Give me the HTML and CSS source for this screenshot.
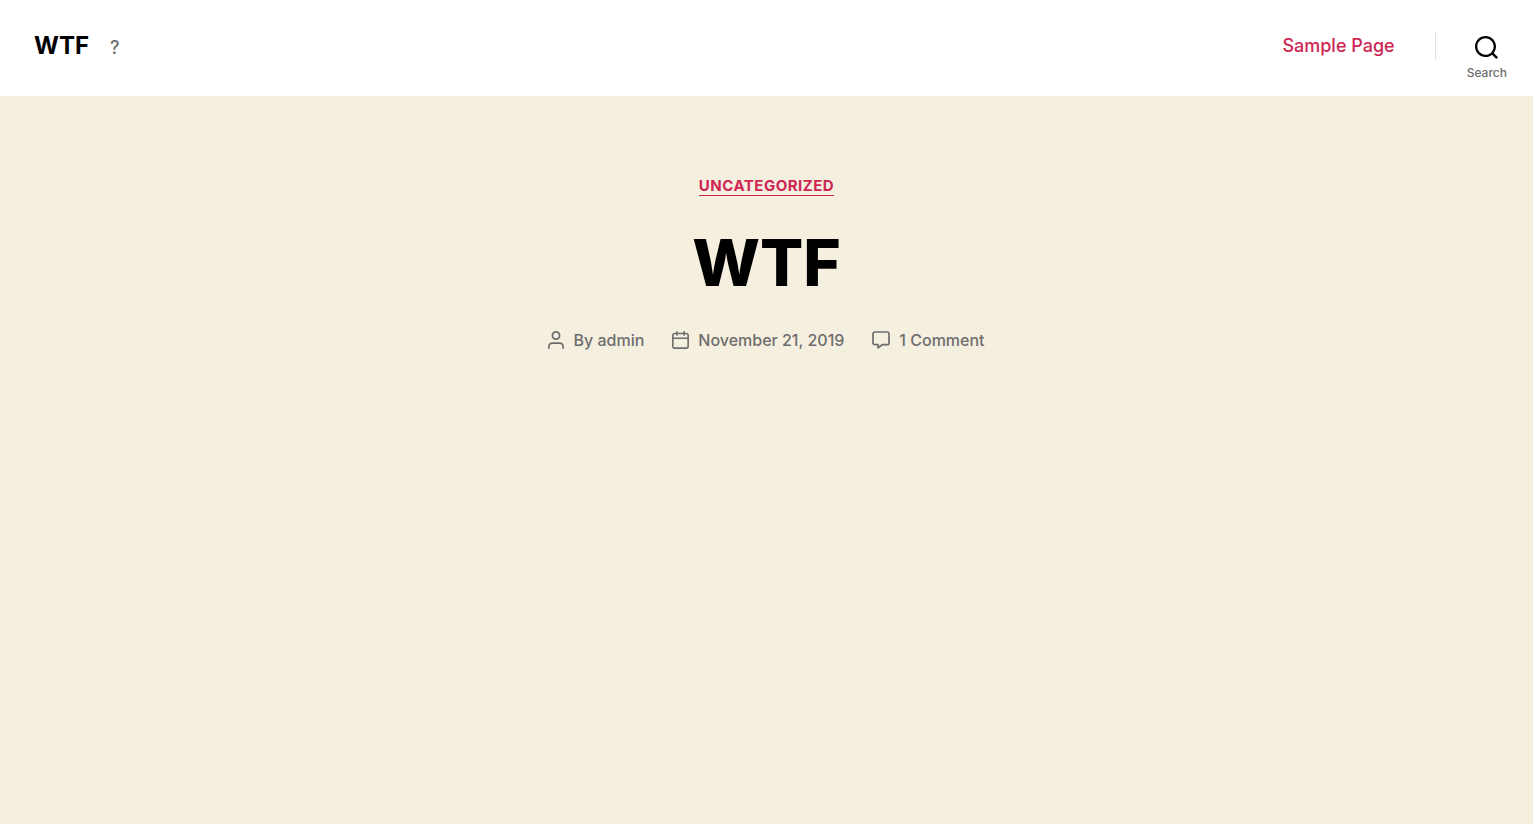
FILE: index.html
```html
<!DOCTYPE html>
<html lang="en-US">
<head>
<meta charset="utf-8">
<meta name="viewport" content="width=device-width, initial-scale=1">
<title>WTF</title>
<link rel="stylesheet" href="styles.css">
</head>
<body>
<header class="site-header">
  <div class="header-titles">
    <a class="site-title" href="#">WTF</a>
    <span class="site-description">?</span>
  </div>
  <div class="header-navigation">
    <nav aria-label="Primary"><a class="nav-link" href="#">Sample Page</a></nav>
    <div class="search-wrapper">
      <button class="search-toggle" type="button">
        <svg class="search-icon" viewBox="0 0 23 23" aria-hidden="true"><path d="M38.710696,48.0601792 L43,52.3494831 L41.3494831,54 L37.0601792,49.710696 C35.2632422,51.1481185 32.9839107,52.0076499 30.5038249,52.0076499 C24.7027226,52.0076499 20,47.3049272 20,41.5038249 C20,35.7027226 24.7027226,31 30.5038249,31 C36.3049272,31 41.0076499,35.7027226 41.0076499,41.5038249 C41.0076499,43.9839107 40.1481185,46.2632422 38.710696,48.0601792 Z M36.3875844,47.1716785 C37.8030221,45.7026647 38.6734666,43.7048964 38.6734666,41.5038249 C38.6734666,36.9918565 35.0157934,33.3341833 30.5038249,33.3341833 C25.9918565,33.3341833 22.3341833,36.9918565 22.3341833,41.5038249 C22.3341833,46.0157934 25.9918565,49.6734666 30.5038249,49.6734666 C32.7048964,49.6734666 34.7026647,48.8030221 36.1716785,47.3875844 C36.2023931,47.347638 36.2360451,47.3092237 36.2726343,47.2726343 C36.3092237,47.2360451 36.347638,47.2023931 36.3875844,47.1716785 Z" transform="translate(-20 -31)"/></svg>
        <span class="search-text">Search</span>
      </button>
    </div>
  </div>
</header>
<main>
  <article class="entry-header">
    <a class="entry-category" href="#">Uncategorized</a>
    <h1 class="entry-title">WTF</h1>
    <ul class="post-meta">
      <li class="meta-item">
        <svg class="meta-icon" width="16" height="18" viewBox="0 0 16 18" aria-hidden="true"><path d="M.9 17.2v-1.7a3.3 3.3 0 0 1 3.3-3.4h7.6a3.3 3.3 0 0 1 3.3 3.4v1.7"/><circle cx="8" cy="4.5" r="3.6"/></svg>
        <span>By <a href="#">admin</a></span>
      </li>
      <li class="meta-item">
        <svg class="meta-icon" width="17" height="18" viewBox="0 0 18 19" aria-hidden="true"><rect x=".9" y="2.6" width="16.2" height="15.5" rx="2"/><path d="M.9 7.7h16.2M5.2.9v3.4M12.8.9v3.4"/></svg>
        <a href="#">November 21, 2019</a>
      </li>
      <li class="meta-item">
        <svg class="meta-icon" width="18" height="18" viewBox="0 0 18 18" aria-hidden="true"><path d="M2.8 1h12.4A1.8 1.8 0 0 1 17 2.8v9.1a1.8 1.8 0 0 1-1.8 1.8h-4.9l-4.2 3.2v-3.2H2.8A1.8 1.8 0 0 1 1 11.900V2.8A1.8 1.8 0 0 1 2.8 1z"/></svg>
        <a href="#">1 Comment</a>
      </li>
    </ul>
  </article>
</main>
</body>
</html>
```
FILE: styles.css
```css
* { box-sizing: border-box; }
body {
  margin: 0;
  min-height: 100vh;
  background: #f5efe0;
  color: #000;
  font-family: Inter, "Liberation Sans", sans-serif;
}
a { color: inherit; text-decoration: none; }
.site-header {
  display: flex;
  align-items: center;
  justify-content: space-between;
  min-height: 96px;
  padding: 0 0 4px 34px;
  background: #fff;
}
.header-titles {
  display: flex;
  align-items: baseline;
  gap: 21px;
}
.site-title { font-size: 24px; font-weight: 700; line-height: 28px; }
.site-description { color: #6d6d6d; font-size: 18px; font-weight: 500; }
.header-navigation { display: flex; align-items: center; }
.nav-link {
  color: #cd2653;
  font-size: 18px;
  font-weight: 500;
  line-height: 24px;
}
.search-wrapper {
  display: flex;
  align-items: center;
  margin-left: 40px;
  border-left: 1px solid #dedfdf;
  height: 28px;
}
.search-toggle {
  display: flex;
  flex-direction: column;
  align-items: center;
  gap: 6px;
  padding: 24px 26px 0 31px;
  border: 0;
  background: none;
  color: inherit;
  font: inherit;
  cursor: pointer;
}
.search-icon { width: 23px; height: 23px; fill: #000; }
.search-text { color: #6d6d6d; font-size: 12px; font-weight: 500; line-height: 15px; }
.entry-header {
  display: flex;
  flex-direction: column;
  align-items: center;
  padding: 80px 40px;
}
.entry-category {
  border-bottom: 1px solid;
  color: #cd2653;
  font-size: 15px;
  font-weight: 700;
  line-height: 19px;
  letter-spacing: 0.5px;
  text-transform: uppercase;
}
.entry-title {
  margin: 31px 0 0;
  font-size: 64px;
  font-weight: 800;
  line-height: 72px;
}
.post-meta {
  display: flex;
  flex-wrap: wrap;
  justify-content: center;
  gap: 8px 28px;
  margin: 29px 0 0;
  padding: 0;
  list-style: none;
  color: #6d6d6d;
  font-size: 16px;
  font-weight: 500;
  line-height: 24px;
}
.meta-item { display: flex; align-items: center; gap: 9px; }
.meta-icon { fill: none; stroke: #6d6d6d; stroke-width: 1.7; stroke-linecap: round; stroke-linejoin: round; }
```
